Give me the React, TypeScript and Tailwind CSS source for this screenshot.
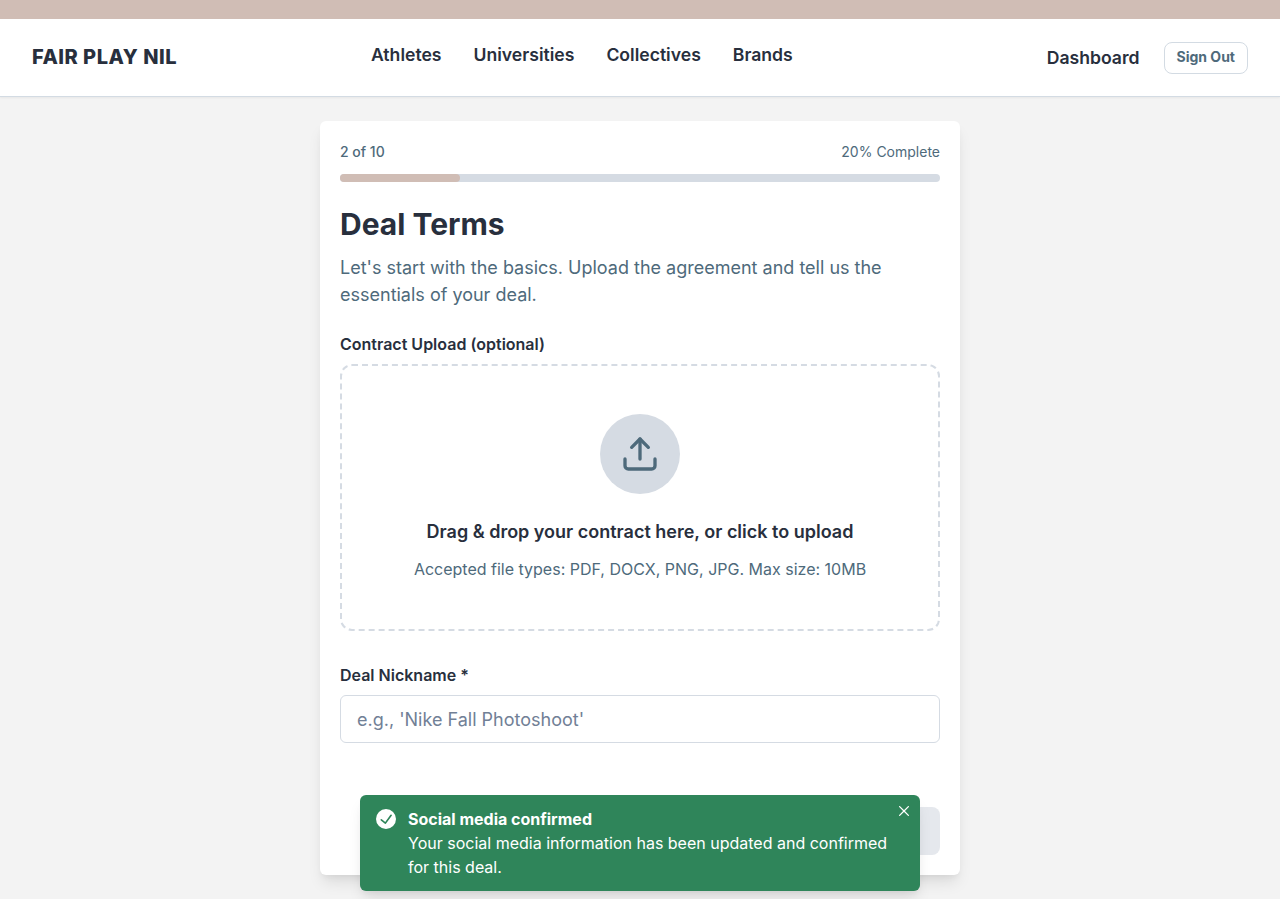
import { Upload } from "lucide-react";

const links = ["Athletes", "Universities", "Collectives", "Brands"];

function Header() {
  return (
    <header className="flex h-[78px] items-start justify-between border-b border-[#d3dbe3] bg-white px-8 shadow-[0_1px_2px_0_rgba(0,0,0,0.05)]">
      <div className="mt-[23px] w-[339px] text-xl leading-[30px] font-extrabold tracking-wide">FAIR PLAY NIL</div>
      <nav className="mt-[22px] flex flex-1 gap-8 text-[17.6px] leading-[27px] font-semibold">
        {links.map((label) => (
          <a key={label}>{label}</a>
        ))}
      </nav>
      <div className="mt-[23px] flex items-center gap-6">
        <a className="pr-[0.5px] pb-px text-[17.6px] leading-[27px] font-semibold">Dashboard</a>
        <button className="h-8 w-[84px] rounded-lg border border-[#d3dbe3] pr-0.5 pb-0.5 pl-[1.5px] text-sm font-bold text-[#4e6a7b]">
          Sign Out
        </button>
      </div>
    </header>
  );
}

function Toast() {
  return (
    <div className="absolute top-[795px] left-[360px] flex h-24 w-[560px] rounded-md bg-[#2f855a] px-4 py-3 text-white shadow-[0_10px_15px_-3px_rgba(0,0,0,0.1),0_4px_6px_-2px_rgba(0,0,0,0.05)]">
      <svg viewBox="0 0 24 24" className="mt-0.5 mr-3 size-5 shrink-0" fill="currentColor">
        <path d="M12,0A12,12,0,1,0,24,12,12.014,12.014,0,0,0,12,0Zm6.927,8.2-6.845,9.289a1.011,1.011,0,0,1-1.43.188L5.764,13.769a1,1,0,1,1,1.25-1.562l4.076,3.261,6.227-8.451A1,1,0,1,1,18.927,8.2Z" />
      </svg>
      <div className="w-[488px] shrink-0 text-base leading-6">
        <div className="font-bold">Social media confirmed</div>
        <div>Your social media information has been updated and confirmed for this deal.</div>
      </div>
      <button className="absolute top-1 right-1 flex size-6 items-center justify-center" aria-label="Close">
        <svg viewBox="0 0 24 24" className="size-2.5" fill="currentColor">
          <path d="M.439,21.44a1.5,1.5,0,0,0,2.122,2.121L11.823,14.3a.25.25,0,0,1,.354,0l9.262,9.263a1.5,1.5,0,1,0,2.122-2.121L14.3,12.177a.25.25,0,0,1,0-.354l9.263-9.262A1.5,1.5,0,0,0,21.439.44L12.177,9.7a.25.25,0,0,1-.354,0L2.561.44A1.5,1.5,0,0,0,.439,2.561L9.7,11.823a.25.25,0,0,1,0,.354Z" />
        </svg>
      </button>
    </div>
  );
}

export default function App() {
  return (
    <div className="relative h-[899px] overflow-hidden bg-[#f3f3f3] font-['Inter',sans-serif] text-[#282f3d]">
      <div className="h-[19px] bg-[#d0bdb5]" />
      <Header />
      <main className="mx-auto mt-6 h-[754px] w-[640px] rounded-md bg-white p-5 shadow-[0_10px_15px_-3px_rgba(0,0,0,0.1),0_4px_6px_-2px_rgba(0,0,0,0.05)]">
        <div className="flex justify-between text-sm leading-[21px] text-[#4e6a7b]">
          <span className="font-medium">2 of 10</span>
          <span>20% Complete</span>
        </div>
        <div className="mt-3 h-2 rounded bg-[#d5dbe3]">
          <div className="h-2 w-1/5 rounded bg-[#d0bdb5]" />
        </div>
        <h1 className="mt-6 text-3xl leading-9 font-bold">Deal Terms</h1>
        <p className="mt-3 text-lg leading-[27px] text-[#4e6a7b]">
          Let's start with the basics. Upload the agreement and tell us the essentials of your deal.
        </p>
        <div className="mt-6 text-base leading-6 font-semibold">Contract Upload (optional)</div>
        <div className="mt-2 flex h-[267px] flex-col items-center rounded-xl border-2 border-dashed border-[#d5dbe3] pt-12">
          <div className="flex size-20 items-center justify-center rounded-full bg-[#d5dbe3] text-[#4e6a7b]">
            <Upload size={40} strokeWidth={2} />
          </div>
          <div className="mt-6 text-lg leading-[27px] font-semibold">Drag &amp; drop your contract here, or click to upload</div>
          <div className="mt-3 text-base leading-6 text-[#4e6a7b]">Accepted file types: PDF, DOCX, PNG, JPG. Max size: 10MB</div>
        </div>
        <label className="mt-8 block text-base leading-6 font-semibold">Deal Nickname *</label>
        <input
          className="mt-2 block h-12 w-full rounded-md border border-[#d5dbe3] px-4 text-lg placeholder:text-[#718096]"
          placeholder="e.g., 'Nike Fall Photoshoot'"
        />
        <div className="mt-16 flex justify-end">
          <div className="h-12 w-40 rounded-lg bg-[#e5e8ed]" />
        </div>
      </main>
      <Toast />
    </div>
  );
}
